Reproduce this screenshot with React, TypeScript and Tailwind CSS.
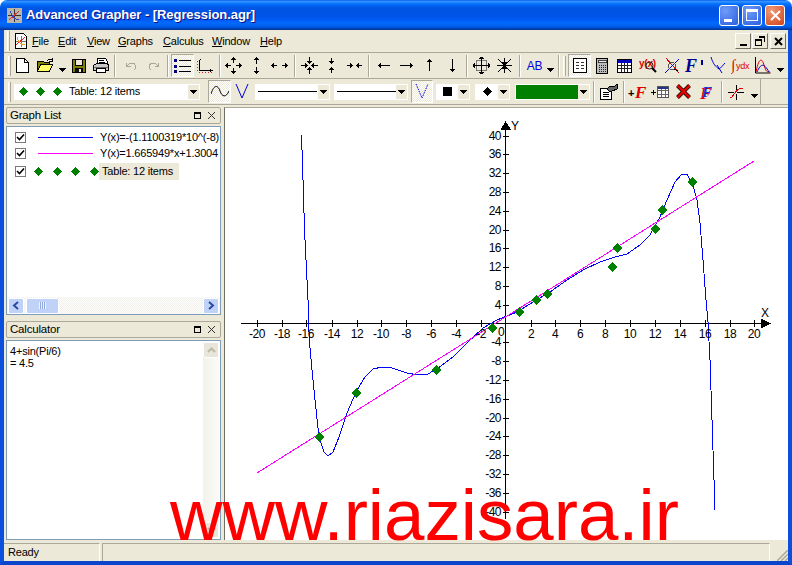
import React from 'react';

const BLUE_CURVE =
  '301,135 302,150 303,180 304,213 305,240 306,260 307,280 308,300 308.7,323 309.3,340 311.7,367 315,400 319,437 324,452 328,456 333,452 339,437 347,413 356,392 365,377 373,369 382,367 392,368 407,373 418,375 428,374 438,368 453,357 467,343 483,328 497,320 517,312 533,302 550,292 567,280 583,270 600,262 615,257 627,254 640,245 650,235 660,217 667,200 675,182 682,174 687,174 693,185 697,200 700,223 703,260 706,300 708,322 710,360 712,420 714,480 715,510';

const POINTS = [
  [319, 437],
  [356, 393],
  [436, 370],
  [492, 328],
  [519, 312],
  [536, 300],
  [547, 294],
  [612, 267],
  [617, 248],
  [655, 229],
  [662, 210],
  [692, 182],
];

const X_LABELS = [
  ['-20', 257], ['-18', 282], ['-16', 306], ['-14', 332], ['12', 357], ['-10', 381], ['-8', 406], ['-6', 431], ['-4', 456], ['-2', 481],
  ['2', 531], ['4', 555], ['6', 580], ['8', 605], ['10', 630], ['12', 655], ['14', 680], ['16', 705], ['18', 730], ['20', 754],
] as const;

const Y_LABELS = [
  40, 36, 32, 28, 24, 20, 16, 12, 8, 4, -4, -8, -12, -16, -20, -24, -28, -32, -36, -40,
];

const Ic = ({ w = 16, h = 16, children }: { w?: number; h?: number; children: React.ReactNode }) => (
  <svg width={w} height={h} viewBox={`0 0 ${w} ${h}`} fill="none" stroke="#000" shapeRendering="crispEdges">
    {children}
  </svg>
);

const Diamond = () => (
  <svg width="9" height="9" viewBox="0 0 9 9" shapeRendering="crispEdges">
    <path d="M4.5 0 9 4.5 4.5 9 0 4.5z" fill="#008000" />
  </svg>
);

const LineSample = ({ color }: { color: string }) => (
  <svg width="55" height="3" viewBox="0 0 55 3" className="ml-[12px] shrink-0" shapeRendering="crispEdges">
    <path d="M0 1.500h55" stroke={color} fill="none" />
  </svg>
);

const Caret = () => (
  <svg width="7" height="4" viewBox="0 0 7 4" shapeRendering="crispEdges">
    <path d="M0 0h7L3.5 4z" fill="#000" />
  </svg>
);

const Grip = () => <div className="mx-[3px] h-[20px] w-[3px] shrink-0 border-r border-l border-r-[#aca899] border-l-white bg-[#f4f2e8]" />;

const Sep = ({ className = 'w-[6px]' }: { className?: string }) => (
  <div className={`flex h-[22px] shrink-0 justify-center ${className}`}>
    <div className="h-full w-[2px] border-r border-l border-r-white border-l-[#aca899]" />
  </div>
);

const Btn = ({
  className = 'w-[23px]',
  checked = false,
  children,
}: {
  className?: string;
  checked?: boolean;
  children: React.ReactNode;
}) => (
  <div
    className={`flex h-[23px] shrink-0 items-center justify-center ${className} ${
      checked
        ? 'border border-t-[#aca899] border-r-white border-b-white border-l-[#aca899] bg-[repeating-conic-gradient(#ffffff_0_25%,#ece9d8_0_50%)] bg-[length:2px_2px]'
        : ''
    }`}
  >
    {children}
  </div>
);

const Drop = ({ className = 'w-[10px]' }: { className?: string }) => (
  <div className={`flex h-[22px] shrink-0 items-end justify-center pb-[5px] ${className}`}>
    <Caret />
  </div>
);

const Combo = ({ className, children }: { className: string; children: React.ReactNode }) => (
  <div className={`flex h-[16px] shrink-0 items-center border-[1px] border-white bg-white ${className}`}>
    <div className="flex min-w-0 flex-1 items-center">{children}</div>
    <div className="flex h-full w-[11px] shrink-0 items-center justify-center bg-[#ece9d8]">
      <Caret />
    </div>
  </div>
);

const Menu = ({ first, rest, className }: { first: string; rest: string; className: string }) => (
  <span className={`mt-px shrink-0 ${className}`}>
    <span className="underline">{first}</span>
    {rest}
  </span>
);

const PanelHead = ({ title }: { title: string }) => (
  <div className="flex h-[17px] shrink-0 items-center rounded-[2px] border border-[#aca899] pr-[4px] pl-[3px]">
    <span className="flex-1 text-[11.5px]">{title}</span>
    <div className="mr-[6px] h-[7px] w-[7px] border border-t-2 border-black" />
    <Ic w={9} h={9}>
      <path d="M1 1l7 7M8 1 1 8" stroke="#333" />
    </Ic>
  </div>
);

const ChevBtn = ({ d }: { d: string }) => (
  <div className="flex h-[16px] w-[16px] shrink-0 items-center justify-center rounded-[2px] border border-white bg-[#c1d2f8]">
    <svg width="8" height="9" viewBox="0 0 8 9" fill="none" stroke="#2b4aa0" strokeWidth="2">
      <path d={d} />
    </svg>
  </div>
);

const Check = () => (
  <div className="flex h-[11px] w-[11px] shrink-0 items-center justify-center border border-[#7a7a7a] bg-white">
    <svg width="9" height="9" viewBox="0 0 9 9" fill="none" stroke="#000" strokeWidth="1.6">
      <path d="M1 4l2.5 2.5L8 1.5" />
    </svg>
  </div>
);

const Arrow = ({ d }: { d: string }) => (
  <Ic w={17} h={17}>
    <path d={d} />
  </Ic>
);

const serif = 'Liberation Serif';

export default function App() {
  return (
    <div className="relative flex h-[565px] w-[792px] flex-col overflow-hidden bg-white font-['Liberation_Sans',sans-serif] text-[11px] tracking-[-0.2px] text-black">
      {/* title bar */}
      <div className="flex h-[30px] shrink-0 items-center rounded-t-[7px] bg-[linear-gradient(180deg,#0058ee_0%,#3593ff_4%,#288eff_7%,#127dff_10%,#036ffc_14%,#0262ee_20%,#0057e5_26%,#0054e3_34%,#0055eb_56%,#005bf5_66%,#026afe_76%,#0062ef_86%,#0052d6_92%,#0040ab_96%,#003092_100%)] pr-[7px] pl-[7px]">
        <svg width="15" height="15" viewBox="0 0 15 15" className="shrink-0" shapeRendering="crispEdges">
          <rect width="15" height="15" fill="#b9b6a9" />
          <path d="M7.5 1v13M1 7.5h13" stroke="#333" fill="none" />
          <path d="M2 12 12 3" stroke="#e03030" fill="none" />
          <path d="M3 3c3 8 6 8 9 9" stroke="#3344cc" fill="none" />
        </svg>
        <span className="ml-[4px] flex-1 text-[13px] font-bold tracking-[-0.06px] text-white [text-shadow:1px_1px_#0f1089]">
          Advanced Grapher - [Regression.agr]
        </span>
        <div className="flex items-center gap-[3px]">
          <div className="flex h-[21px] w-[20px] items-end rounded-[3px] border border-white bg-[radial-gradient(circle_at_30%_25%,#6f9cf7,#2a5ee0)] pb-[3px] pl-[4px]">
            <div className="h-[3px] w-[8px] bg-white" />
          </div>
          <div className="flex h-[21px] w-[20px] items-center justify-center rounded-[3px] border border-white bg-[radial-gradient(circle_at_30%_25%,#6f9cf7,#2a5ee0)]">
            <div className="h-[12px] w-[12px] border border-t-[3px] border-white" />
          </div>
          <div className="flex h-[21px] w-[20px] items-center justify-center rounded-[3px] border border-white bg-[radial-gradient(circle_at_30%_25%,#f09a78,#cf4217)]">
            <svg width="11" height="11" viewBox="0 0 11 11" stroke="#fff" strokeWidth="2">
              <path d="M1 1l9 9M10 1l-9 9" />
            </svg>
          </div>
        </div>
      </div>

      <div className="flex min-h-0 flex-1 flex-col border-x-[4px] border-b-[4px] border-x-[#0a50dc] border-b-[#0a45cc] bg-[#ece9d8]">
        {/* menu */}
        <div className="flex h-[22px] shrink-0 items-center pr-[2px]">
          <Grip />
          <svg width="16" height="16" viewBox="0 0 16 16" className="shrink-0" shapeRendering="crispEdges">
            <path d="M2.5.5h8l3 3v12h-11z" fill="#fff" stroke="#000" />
            <path d="M3 8h10M8 3v11" stroke="#777" />
            <path d="M3 12 12 4" stroke="#e02020" />
            <path d="M4 4c2 7 5 8 8 8" stroke="#e0a020" fill="none" />
          </svg>
          <Menu first="F" rest="ile" className="ml-[3px] w-[26px]" />
          <Menu first="E" rest="dit" className="w-[29px]" />
          <Menu first="V" rest="iew" className="w-[31px]" />
          <Menu first="G" rest="raphs" className="w-[45px]" />
          <Menu first="C" rest="alculus" className="w-[49px]" />
          <Menu first="W" rest="indow" className="w-[48px]" />
          <Menu first="H" rest="elp" className="flex-1" />
          <div className="flex items-center">
            <div className="flex h-[16px] w-[16px] items-end justify-center border border-t-white border-r-[#716f64] border-b-[#716f64] border-l-white pb-[2px]">
              <div className="h-[2px] w-[7px] bg-black" />
            </div>
            <div className="ml-[1px] flex h-[16px] w-[16px] items-center justify-center border border-t-white border-r-[#716f64] border-b-[#716f64] border-l-white">
              <Ic w={10} h={10}>
                <path d="M3.5.5h6v5M3.5 1.5h6M.5 3.5h6v6h-6zM.5 4.5h6" />
              </Ic>
            </div>
            <div className="ml-[2px] flex h-[16px] w-[16px] items-center justify-center border border-t-white border-r-[#716f64] border-b-[#716f64] border-l-white">
              <svg width="9" height="9" viewBox="0 0 9 9" stroke="#000" strokeWidth="2">
                <path d="M1 1l7 7M8 1 1 8" />
              </svg>
            </div>
          </div>
        </div>

        {/* main toolbar */}
        <div className="flex h-[27px] shrink-0 items-center border-t border-b border-t-[#aca899] border-b-[#aca899]">
          <div className="w-[7px] shrink-0 pl-[1px]">
            <Grip />
          </div>
          <Btn>
            <Ic w={13} h={15}>
              <path d="M.5.5h8l4 4v10H.5z" fill="#fff" />
              <path d="M8.5.5v4h4" />
            </Ic>
          </Btn>
          <Btn>
            <Ic w={17} h={15}>
              <path d="M.5 3.5h6l1 1h5v2h-9l-3 7z" fill="#808000" />
              <path d="M.5 13.5l3-7h12l-3 7z" fill="#ffff66" />
              <path d="M10 3c1-2 3-2 5-1m0-2v3h-3" />
            </Ic>
          </Btn>
          <Drop />
          <Btn>
            <Ic w={14} h={14}>
              <path d="M.5.5h13v13H.5z" fill="#808000" />
              <path d="M3.5.5h7v6h-7z" fill="#ece9d8" />
              <path d="M3.5 9.5h7v4h-7z" fill="#111" />
              <path d="M7 10h2v3H7z" fill="#ece9d8" stroke="none" />
            </Ic>
          </Btn>
          <Btn className="w-[21px]">
            <Ic w={16} h={15}>
              <path d="M4.5.5h8l2 3v3h-10z" fill="#fff" />
              <path d="M6 2.5h5M6 4.5h6" />
              <path d="M.5 7.5l3-2h11l1 2v5h-15z" fill="#c8c8c8" />
              <path d="M3.5 10.5h9v4h-9z" fill="#fff" />
              <path d="M1 9.5h14" stroke="#666" />
            </Ic>
          </Btn>
          <Sep className="w-[8px]" />
          <Btn>
            <Ic>
              <path d="M3.5 4.5v4h4M4 8c3-4 8-4 9 1 0 1-1 2-2 3" stroke="#aca899" />
            </Ic>
          </Btn>
          <Btn>
            <Ic>
              <path d="M12.5 4.5v4h-4M12 8C9 4 4 4 3 9c0 1 1 2 2 3" stroke="#aca899" />
            </Ic>
          </Btn>
          <Sep />
          <Btn checked>
            <Ic w={17} h={14}>
              <path d="M5 1.5h12M5 7h12M5 12.5h12" />
              <path d="M0 0h3v3H0zM0 5.5h3v3H0zM0 11h3v3H0z" fill="#000080" stroke="none" />
            </Ic>
          </Btn>
          <Btn>
            <Ic w={17} h={16}>
              <path d="M2.5 1.5v11h13" />
              <path d="M.5 3v11M2 14.5h14" stroke="#e02020" strokeDasharray="1 2" />
              <path d="M3 1.5h1M13 11.5l2 1-2 1" />
            </Ic>
          </Btn>
          <Sep className="w-[5px]" />
          <Btn>
            <Arrow d="M8.5 1v5M8.5 11v5M1 8.5h5M11 8.5h5M6.5 3l2-2 2 2M6.5 14l2 2 2-2M3 6.5l-2 2 2 2M14 6.5l2 2-2 2" />
          </Btn>
          <Btn>
            <Arrow d="M8.5 1v6M8.5 10v6M6.5 3l2-2 2 2M6.5 14l2 2 2-2" />
          </Btn>
          <Btn>
            <Arrow d="M1 8.5h5M11 8.5h5M3 6.5l-2 2 2 2M14 6.5l2 2-2 2" />
          </Btn>
          <Sep className="w-[7px]" />
          <Btn className="w-[22px]">
            <Arrow d="M8.5 0v6M8.5 11v6M0 8.5h6M11 8.5h6M6.5 4l2 2 2-2M6.5 13l2-2 2 2M4 6.5l2 2-2 2M13 6.5l-2 2 2 2" />
          </Btn>
          <Btn>
            <Arrow d="M8.5 1v5M8.5 11v5M6.5 4l2 2 2-2M6.5 13l2-2 2 2" />
          </Btn>
          <Btn className="w-[22px]">
            <Arrow d="M1 8.5h5M11 8.5h5M4 6.5l2 2-2 2M13 6.5l-2 2 2 2" />
          </Btn>
          <Sep className="w-[8px]" />
          <Btn className="w-[22px]">
            <Arrow d="M2 8.5h12M5 6.5l-2 2 2 2" />
          </Btn>
          <Btn>
            <Arrow d="M2 8.5h12M12 6.5l2 2-2 2" />
          </Btn>
          <Btn>
            <Arrow d="M8.5 2v12M6.5 5l2-2 2 2" />
          </Btn>
          <Btn>
            <Arrow d="M8.5 2v12M6.5 12l2 2 2-2" />
          </Btn>
          <Sep />
          <Btn>
            <Ic w={17} h={17}>
              <path d="M3.5 3.5h10v10h-10z" stroke="#777" />
              <path d="M8.5 0v17M0 8.5h17M6.5 2l2-2 2 2M6.5 15l2 2 2-2M2 6.5l-2 2 2 2M15 6.5l2 2-2 2" />
            </Ic>
          </Btn>
          <Btn>
            <Ic w={17} h={17}>
              <path d="M8.5 1v15M1 8.5h15M2 2l13 13M15 2 2 15M6.5 5l2 2 2-2M6.5 12l2-2 2 2" />
            </Ic>
          </Btn>
          <Sep className="w-[8px]" />
          <div className="flex h-[22px] w-[21px] shrink-0 items-center justify-center text-[12px] text-[#0000e0]">AB</div>
          <Drop className="w-[11px]" />
          <Sep />
          <div className="w-[6px] shrink-0">
            <div className="ml-[1px] h-[20px] w-[3px] border-r border-l border-r-[#aca899] border-l-white bg-[#f4f2e8]" />
          </div>
          <Btn checked>
            <Ic w={14} h={15}>
              <path d="M.5.5h13v14H.5z" fill="#fff" />
              <path d="M3 4h3M8 4h3M3 7h3M8 7h3M3 10h3M8 10h3" stroke="#333" />
            </Ic>
          </Btn>
          <Btn className="w-[21px]">
            <Ic w={12} h={16}>
              <path d="M.5.5h11v15H.5z" fill="#bdbdbd" />
              <path d="M2 2.5h8v2H2z" fill="#eee" stroke="#444" />
              <path d="M2.5 7h7M2.5 9h7M2.5 11h7M2.5 13h7" stroke="#222" strokeDasharray="1 1" />
            </Ic>
          </Btn>
          <Btn className="w-[24px]">
            <Ic w={15} h={14}>
              <path d="M.5.5h14v13H.5z" fill="#fff" />
              <path d="M1 1h13v3H1z" fill="#0000c0" stroke="none" />
              <path d="M1 6.5h13M1 9.5h13M4.5 4v9M7.5 4v9M10.5 4v9" stroke="#222" />
            </Ic>
          </Btn>
          <Btn className="w-[24px]">
            <svg width="19" height="17" viewBox="0 0 19 17" fill="none">
              <text x="0" y="10" fontFamily="Liberation Sans" fontSize="10" fontWeight="700" fill="#e00000">
                y(x)
              </text>
              <circle cx="10.5" cy="8.5" r="3.5" stroke="#222" />
              <path d="M13 11l4 4" stroke="#000" strokeWidth="2" />
            </svg>
          </Btn>
          <Btn>
            <Ic w={16} h={16}>
              <path d="M2 0l13 15" stroke="#e00000" />
              <path d="M15 1 1 15" stroke="#0000d0" />
              <circle cx="8" cy="8" r="3.5" stroke="#555" />
              <path d="M10 11l4 2" stroke="#000" />
            </Ic>
          </Btn>
          <Btn>
            <svg width="20" height="18" viewBox="0 0 20 18">
              <text x="0" y="15" fontFamily={serif} fontSize="18" fontWeight="700" fontStyle="italic" fill="#000090">
                F
              </text>
              <path d="M17 3v5" stroke="#000090" strokeWidth="2" />
            </svg>
          </Btn>
          <Btn>
            <svg width="16" height="17" viewBox="0 0 16 17" fill="none" stroke="#0000d0">
              <path d="M1 0c2 7 5 10 8 12 2-1 4-4 6-6" />
              <path d="M7 8l5 8" />
            </svg>
          </Btn>
          <Btn>
            <svg width="19" height="17" viewBox="0 0 19 17">
              <text x="0" y="13" fontFamily={serif} fontSize="15" fill="#e00000">
                ∫
              </text>
              <text x="5" y="12" fontFamily="Liberation Sans" fontSize="9" fill="#e00000">
                ydx
              </text>
            </svg>
          </Btn>
          <Btn className="w-[21px]">
            <svg width="17" height="17" viewBox="0 0 17 17" fill="none" stroke="#000">
              <path d="M1.5 0v16h15" />
              <path d="M2 15C5 0 8 1 10 8s3 7 6 7" stroke="#e00000" />
              <path d="M3 15C7 6 10 6 15 15" stroke="#0000d0" />
            </svg>
          </Btn>
          <Drop className="w-[15px]" />
        </div>

        {/* properties toolbar */}
        <div className="flex h-[26px] shrink-0 items-center border-b border-b-[#aca899]">
          <div className="w-[10px] shrink-0 pl-[1px]">
            <Grip />
          </div>
          <Combo className="w-[186px]">
            <div className="ml-[4px] flex items-center gap-[8px]">
              <Diamond />
              <Diamond />
              <Diamond />
            </div>
            <span className="ml-[7px] text-[11px]">Table: 12 items</span>
          </Combo>
          <div className="w-[8px] shrink-0" />
          <Btn checked className="w-[23px]">
            <svg width="18" height="12" viewBox="0 0 18 12" fill="none" stroke="#000">
              <path d="M0 8C3-2 7-1 9 5s6 7 9 0" />
            </svg>
          </Btn>
          <Btn className="w-[22px]">
            <svg width="14" height="15" viewBox="0 0 14 15" fill="none" stroke="#0000e0">
              <path d="M1 0l6 14 6-14" />
            </svg>
          </Btn>
          <div className="w-[2px] shrink-0" />
          <Combo className="w-[75px]">
            <div className="ml-[2px] h-px w-[59px] bg-black" />
          </Combo>
          <div className="w-[4px] shrink-0" />
          <Combo className="w-[74px]">
            <div className="ml-[2px] h-px w-[59px] bg-black" />
          </Combo>
          <div className="w-[3px] shrink-0" />
          <Btn checked className="w-[22px]">
            <svg width="14" height="15" viewBox="0 0 14 15" fill="none" stroke="#0000e0" strokeDasharray="1.5 1">
              <path d="M1 0l6 14 6-14" />
            </svg>
          </Btn>
          <div className="w-[3px] shrink-0" />
          <Combo className="w-[34px]">
            <div className="ml-[6px] h-[9px] w-[9px] bg-black" />
          </Combo>
          <div className="w-[5px] shrink-0" />
          <Combo className="w-[35px]">
            <div className="ml-[7px] flex">
              <svg width="9" height="9" viewBox="0 0 9 9" shapeRendering="crispEdges">
                <path d="M4.5 0 9 4.5 4.5 9 0 4.5z" fill="#000" />
              </svg>
            </div>
          </Combo>
          <div className="w-[5px] shrink-0" />
          <Combo className="w-[75px]">
            <div className="h-[14px] flex-1 bg-[#008000]" />
          </Combo>
          <Sep className="w-[8px]" />
          <Btn className="w-[22px]">
            <Ic w={18} h={16}>
              <path d="M.5 4.5h9l2 2v9H.5z" fill="#fff" />
              <path d="M3 8.5h6M3 10.5h6M3 12.5h6" />
              <path d="M7 5l3-3h5l2-2v5l-5 2H9z" fill="#666" />
            </Ic>
          </Btn>
          <Sep className="w-[8px]" />
          <Btn className="w-[20px]">
            <svg width="20" height="18" viewBox="0 0 20 18">
              <text x="0" y="14" fontFamily="Liberation Sans" fontSize="11" fontWeight="700" fill="#000">
                +
              </text>
              <text x="7" y="15" fontFamily={serif} fontSize="17" fontWeight="700" fontStyle="italic" fill="#e00000">
                F
              </text>
            </svg>
          </Btn>
          <Btn className="w-[24px]">
            <Ic w={18} h={13}>
              <path d="M0 7h5M2.5 4.5v5" />
              <path d="M6.5 1.5h11v11h-11z" fill="#fff" stroke="#555" />
              <path d="M7 2h10v2H7z" fill="#223388" stroke="none" />
              <path d="M7 5.5h10M7 9h10M10 4v8M14 4v8" stroke="#666" />
            </Ic>
          </Btn>
          <Btn className="w-[22px]">
            <svg width="15" height="15" viewBox="0 0 15 15" fill="none">
              <path d="M1.5 1.5l12 12M13.5 1.5l-12 12" stroke="#000" strokeWidth="4" />
              <path d="M1.5 1.5l12 12M13.5 1.5l-12 12" stroke="#e00000" strokeWidth="2.5" />
            </svg>
          </Btn>
          <Btn className="w-[26px]">
            <svg width="20" height="18" viewBox="0 0 20 18" className="overflow-visible">
              <text x="3" y="16" fontFamily={serif} fontSize="17" fontWeight="700" fontStyle="italic" fill="#e00000">
                F
              </text>
              <text x="5" y="14" fontFamily={serif} fontSize="15" fontWeight="700" fontStyle="italic" fill="#1030d0">
                F
              </text>
            </svg>
          </Btn>
          <Sep className="w-[4px]" />
          <Btn className="w-[24px]">
            <svg width="16" height="16" viewBox="0 0 16 16" fill="none" stroke="#000" shapeRendering="crispEdges">
              <path d="M0 8h6M9 8h7" />
              <path d="M8.5 1v5M8.5 10v6" />
              <path d="M2 14C6 14 6 4 15 4" stroke="#e00000" />
            </svg>
          </Btn>
          <Drop className="w-[12px]" />
          <div className="h-[26px] w-[1px] shrink-0 bg-[#aca899]" />
        </div>

        {/* body */}
        <div className="flex min-h-0 flex-1">
          <div className="flex w-[220px] shrink-0 flex-col pt-[2px] pr-[3px] pl-[2px]">
            <PanelHead title="Graph List" />
            <div className="mt-[2px] flex h-[189px] shrink-0 flex-col overflow-hidden border border-[#7f9db9] bg-white">
              <div className="flex-1 overflow-hidden pt-[2px] pl-[8px]">
                <div className="flex h-[16px] items-center">
                  <Check />
                  <LineSample color="#0000ff" />
                  <span className="ml-[7px] whitespace-nowrap">Y(x)=-(1.1100319*10^(-8)</span>
                </div>
                <div className="flex h-[16px] items-center">
                  <Check />
                  <LineSample color="#ff00ff" />
                  <span className="ml-[7px] whitespace-nowrap">Y(x)=1.665949*x+1.3004</span>
                </div>
                <div className="mt-px flex h-[18px] items-center">
                  <Check />
                  <div className="ml-[8px] flex w-[65px] shrink-0 gap-[9.5px]">
                    <Diamond />
                    <Diamond />
                    <Diamond />
                    <Diamond />
                  </div>
                  <span className="flex h-[17px] w-[80px] items-center bg-[#ece9d8] pl-[3px] whitespace-nowrap">
                    Table: 12 items
                  </span>
                </div>
              </div>
              <div className="flex h-[17px] shrink-0 items-center gap-[2px] bg-[repeating-conic-gradient(#ffffff_0_25%,#f0efe8_0_50%)] bg-[length:2px_2px] px-px">
                <ChevBtn d="M6 1 2 4.5 6 8" />
                <div className="flex h-[16px] w-[33px] items-center justify-center rounded-[2px] border border-white bg-[#c1d2f8]">
                  <div className="h-[7px] w-[7px] bg-[repeating-linear-gradient(90deg,#eef3fe_0_1px,#8fa8dc_1px_2px)]" />
                </div>
                <div className="flex-1" />
                <ChevBtn d="M2 1l4 3.5L2 8" />
              </div>
            </div>
            <div className="h-[6px] shrink-0" />
            <PanelHead title="Calculator" />
            <div className="mt-[2px] mb-[3px] flex min-h-0 flex-1 border border-[#7f9db9] bg-white">
              <div className="flex-1 pt-[4px] pl-[3px] leading-[12px]">
                <div>4+sin(Pi/6)</div>
                <div>= 4.5</div>
              </div>
              <div className="my-px mr-px flex w-[16px] flex-col bg-[linear-gradient(90deg,#f2f1ea,#fbfbf8)]">
                <div className="flex h-[16px] items-center justify-center rounded-[2px] border border-white bg-[#e8e6db]">
                  <svg width="9" height="6" viewBox="0 0 9 6" fill="none" stroke="#bdb9a6" strokeWidth="2">
                    <path d="M1 5l3.5-3.5L8 5" />
                  </svg>
                </div>
                <div className="flex-1" />
                <div className="flex h-[16px] items-center justify-center rounded-[2px] border border-white bg-[#e8e6db]">
                  <svg width="9" height="6" viewBox="0 0 9 6" fill="none" stroke="#bdb9a6" strokeWidth="2">
                    <path d="M1 1l3.5 3.5L8 1" />
                  </svg>
                </div>
              </div>
            </div>
          </div>

          <div className="mt-[2px] mb-[3px] flex min-w-0 flex-1 border-t border-l border-t-[#aca899] border-l-[#716f64] bg-white">
            <svg width="563" height="432" viewBox="225 108 563 432" className="block" shapeRendering="crispEdges">
              <path d="M241 323.5h524M505.5 128v391" stroke="#000" fill="none" />
              <path d="M505.5 121l6 9h-11zM771 323.5l-10 5v-10z" fill="#000" />
              {X_LABELS.map(([, x]) => (
                <path key={x} d={`M${x + 0.5} 320v7`} stroke="#000" />
              ))}
              {Y_LABELS.map((v) => {
                const y = Math.round(323.5 - v * 4.7);
                return <path key={v} d={`M503 ${y + 0.5}h6`} stroke="#000" />;
              })}
              <polyline points={BLUE_CURVE} fill="none" stroke="#0000ff" />
              <path d="M257 473 754 161" stroke="#ff00ff" fill="none" />
              {POINTS.map(([x, y]) => (
                <path key={x} d={`M${x} ${y - 5}l5 5-5 5-5-5z`} fill="#008000" />
              ))}
              <g fontFamily="Liberation Sans" fontSize="12" letterSpacing="-0.5" fill="#000" shapeRendering="auto">
                {X_LABELS.map(([t, x]) => (
                  <text key={x} x={x} y="338" textAnchor="middle">
                    {t}
                  </text>
                ))}
                {Y_LABELS.map((v) => (
                  <text key={v} x="501" y={Math.round(323.5 - v * 4.7) + 4} textAnchor="end">
                    {v}
                  </text>
                ))}
                <text x="498" y="336">
                  0
                </text>
                <text x="511" y="130">
                  Y
                </text>
                <text x="761" y="317">
                  X
                </text>
              </g>
            </svg>
          </div>
        </div>

        {/* status */}
        <div className="flex h-[18px] shrink-0">
          <div className="flex w-[96px] items-center border-t border-r border-t-[#aca899] border-r-white pl-[4px]">Ready</div>
          <div className="ml-[2px] w-[668px] border-t border-r border-l border-t-[#aca899] border-r-white border-l-[#aca899]" />
          <div className="relative flex-1">
            <svg width="11" height="11" viewBox="0 0 11 11" className="absolute right-0 bottom-0" stroke="#aca899" fill="none">
              <path d="M11 0 0 11M11 4l-7 7M11 8l-3 3" strokeWidth="1.5" />
            </svg>
          </div>
        </div>
      </div>

      {/* watermark */}
      <div className="pointer-events-none absolute top-[479px] left-[170px] text-[72.7px] leading-[72px] tracking-normal whitespace-nowrap text-[#ff0000]">
        www.riazisara.ir
      </div>
    </div>
  );
}
